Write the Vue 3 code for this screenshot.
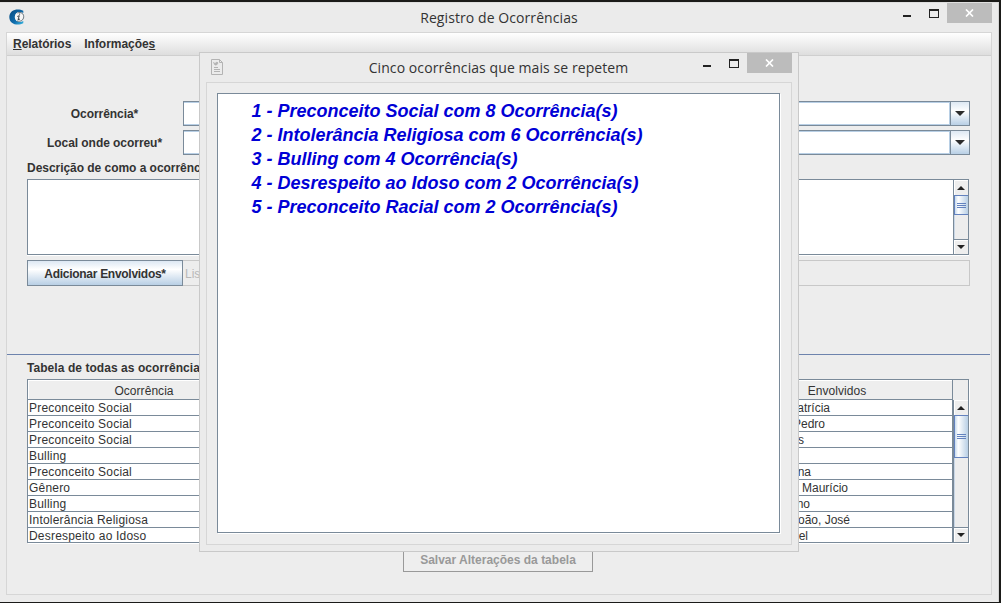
<script setup>
const items = [
  '1 - Preconceito Social com 8 Ocorrência(s)',
  '2 - Intolerância Religiosa com 6 Ocorrência(s)',
  '3 - Bulling com 4 Ocorrência(s)',
  '4 - Desrespeito ao Idoso com 2 Ocorrência(s)',
  '5 - Preconceito Racial com 2 Ocorrência(s)',
]
// "end" is the width in pixels that the list of people takes in its column
const rows = [
  { kind: 'Preconceito Social', people: 'Patrícia', end: 108 },
  { kind: 'Preconceito Social', people: 'Pedro', end: 103 },
  { kind: 'Preconceito Social', people: 's', end: 82 },
  { kind: 'Bulling', people: '', end: 0 },
  { kind: 'Preconceito Social', people: 'na', end: 89 },
  { kind: 'Gênero', people: 'Maurício', end: 126 },
  { kind: 'Bulling', people: 'no', end: 88 },
  { kind: 'Intolerância Religiosa', people: 'João, José', end: 128 },
  { kind: 'Desrespeito ao Idoso', people: 'el', end: 86 },
]
</script>

<template>
  <div class="desktop">
    <main class="window">
      <header class="titlebar">
        <svg class="app-icon" width="16" height="16" viewBox="0 0 16 16">
          <defs>
            <linearGradient id="crescent" x1="0" y1="0" x2="1" y2="1">
              <stop offset="0" stop-color="#084a80" /><stop offset=".6" stop-color="#0f6cac" /><stop offset="1" stop-color="#3cb8e2" />
            </linearGradient>
          </defs>
          <path d="M14.300 1.800V4C12 2.600 9 2.500 7.300 4.300 5.300 6.300 5.300 9.800 7.300 11.600 9.200 13.400 12 13.300 14.300 12v2.200C9 17.200.3 15.500.3 8S9-1.200 14.300 1.800z" fill="url(#crescent)" />
          <ellipse cx="10.300" cy="8" rx="4.400" ry="4.700" fill="#f6f6f6" />
          <path d="M8.500 4c3.500-1.500 6.300.8 6.200 3.700-.1 3.300-2.900 5.300-6.700 4.300" fill="none" stroke="#55626c" stroke-width=".9" />
          <path d="M8.300 7.500 10.300 6.700 9 10.700l2-.7M10.600 4.600v1.100" fill="none" stroke="#27323a" stroke-width=".9" />
        </svg>
        <h1 class="title">Registro de Ocorrências</h1>
        <div class="controls">
          <i class="min"></i><i class="max"></i>
          <span class="close"><svg width="9" height="8" viewBox="0 0 9 8"><path d="M1 .5 8 7.500M8 .5 1 7.500" stroke="#fff" stroke-width="1.700" /></svg></span>
        </div>
      </header>

      <div class="frame">
        <nav class="menubar">
          <span><u>R</u>elatórios</span><span>Informaçõe<u>s</u></span>
        </nav>

        <section class="form">
          <div class="field">
            <label>Ocorrência*</label>
            <div class="combo"><span class="value"></span><span class="drop"><svg width="10" height="5"><path d="M0 0h10L5 5z" fill="#2c2c2c" /></svg></span></div>
          </div>
          <div class="field">
            <label>Local onde ocorreu*</label>
            <div class="combo"><span class="value"></span><span class="drop"><svg width="10" height="5"><path d="M0 0h10L5 5z" fill="#2c2c2c" /></svg></span></div>
          </div>
          <p class="caption lower">Descrição de como a ocorrência aconteceu*</p>
          <div class="textarea">
            <div class="paper"></div>
            <div class="scroll">
              <span class="arrow up"><svg width="8" height="4"><path d="M0 4h8L4 0z" fill="#222" /></svg></span>
              <span class="thumb short"><i></i><i></i><i></i></span>
              <span class="track"></span>
              <span class="arrow down"><svg width="8" height="4"><path d="M0 0h8L4 4z" fill="#222" /></svg></span>
            </div>
          </div>
          <div class="people">
            <button class="add">Adicionar Envolvidos*</button>
            <div class="list">Lista</div>
          </div>
        </section>

        <section class="records">
          <p class="caption wide">Tabela de todas as ocorrências</p>
          <div class="table">
            <div class="grid">
              <div class="row head"><span>Ocorrência</span><span></span><span></span><span>Envolvidos</span></div>
              <div v-for="(r, i) in rows" :key="i" class="row">
                <span>{{ r.kind }}</span><span></span><span></span>
                <span><b :style="{ width: r.end + 'px' }">{{ r.people }}</b></span>
              </div>
            </div>
            <div class="side">
              <div class="corner"></div>
              <div class="scroll">
                <span class="arrow up"><svg width="8" height="4"><path d="M0 4h8L4 0z" fill="#222" /></svg></span>
                <span class="thumb tall"><i></i><i></i><i></i></span>
                <span class="track"></span>
                <span class="arrow down"><svg width="8" height="4"><path d="M0 0h8L4 4z" fill="#222" /></svg></span>
              </div>
            </div>
          </div>
          <button class="save">Salvar Alterações da tabela</button>
        </section>
      </div>
    </main>

    <div class="dialog">
      <header class="titlebar">
        <svg class="doc-icon" width="12" height="16" viewBox="0 0 12 16" fill="none" stroke="#b3b3b3">
          <path d="M.5.500h8l3 3v12H.500zM8.500.500v3h3" />
          <path d="M3 8.500h4M3 10.500h6M3 12.500h6" />
          <path d="M2.500 3.500 4 4.500l2-1.500 1 1-1.500 2H4z" fill="#b3b3b3" stroke-width=".8" />
        </svg>
        <h2 class="title">Cinco ocorrências que mais se repetem</h2>
        <div class="controls">
          <i class="min"></i><i class="max"></i>
          <span class="close"><svg width="9" height="8" viewBox="0 0 9 8"><path d="M1 .5 8 7.500M8 .5 1 7.500" stroke="#fff" stroke-width="1.700" /></svg></span>
        </div>
      </header>
      <div class="dialog-frame">
        <ol class="ranking">
          <li v-for="t in items" :key="t">{{ t }}</li>
        </ol>
      </div>
    </div>
  </div>
</template>

<style>
html, body { margin: 0; overflow: hidden; }
</style>

<style scoped>
* { box-sizing: border-box; }
.desktop {
  position: relative; width: 1001px; height: 603px; overflow: hidden;
  background: #1b1b19; padding: 2px 2px 1px 0;
  font: 12px/16px "Liberation Sans", Arial, sans-serif; color: #333;
}
.window {
  height: 600px; background: #ebebeb; border-right: 1px solid #d5d5d5; border-top: 1px solid #dedede;
  padding: 0 6px; display: flex; flex-direction: column;
}
.titlebar { display: flex; align-items: flex-start; height: 29px; flex: none; }
.app-icon { margin: 6px 0 0 3px; }
.title {
  flex: 1; margin: 0; text-align: center; color: #333; letter-spacing: .08px;
  font: 400 14px/20px "Open Sans", "Noto Sans", sans-serif;
}
.window .title { padding: 5px 0 0 70px; }
.controls { display: flex; }
.min { width: 8px; height: 2px; background: #222; margin: 12px 18px 0 0; }
.max { width: 10px; height: 9px; border: 1px solid #222; border-top-width: 2px; margin: 6px 8px 0 0; }
.close { width: 45px; height: 20px; background: #bcbcbc; display: flex; align-items: center; justify-content: center; }
.frame {
  height: 563px; border: 1px solid #d6d6d6; background: #ededed;
  display: flex; flex-direction: column;
}
.menubar {
  height: 23px; flex: none; display: flex; gap: 13px; padding: 3px 6px 0; font-weight: bold; letter-spacing: -.04px;
  background: linear-gradient(#fff, #dedede); border-bottom: 1px solid #cfcfcf;
}
.form { padding: 45px 21px 0 20px; height: 298px; flex: none; }
.field { display: grid; grid-template-columns: 156px 1fr; margin-bottom: 4px; height: 25px; align-items: center; }
label { text-align: center; font-weight: bold; letter-spacing: -.05px; padding-right: 1px; }
.combo { height: 25px; display: flex; border: 1px solid #7a8a99; }
.value { flex: 1; background: #fff; border: 1px solid #b8cfe5; border-left: 0; }
.drop {
  width: 19px; border-left: 1px solid #7a8a99; display: flex; align-items: center; justify-content: center;
  background: linear-gradient(#dde8f3, #fff 40%, #b8cfe5);
}
.caption { margin: 0; font-weight: bold; white-space: nowrap; letter-spacing: -.04px; }
.wide { letter-spacing: .06px; }
.lower { padding-top: 1px; margin-bottom: -1px; }
.textarea { display: flex; height: 76px; margin: 4px 1px 5px 0; border: 1px solid #7a8a99; box-shadow: 0 1px #fff; }
.paper { flex: 1; background: #fff; }
.scroll { width: 15px; display: flex; flex-direction: column; border-left: 1px solid #7a8a99; }
.arrow { height: 15px; flex: none; display: flex; align-items: center; justify-content: center; background: #eee; box-shadow: inset 1px 1px #fff; }
.down { border-top: 1px solid #7a8a99; }
.thumb {
  flex: none; border: 1px solid #6382bf; border-right: 0; background: linear-gradient(90deg, #c8dbee, #fff 25%, #b8cfe5);
  display: flex; flex-direction: column; gap: 1px; align-items: center; justify-content: center;
}
.thumb i { width: 9px; height: 1px; background: #6382bf; }
.thumb.short { height: 20px; }
.thumb.tall { height: 43px; }
.track { flex: 1; box-shadow: inset 1px 0 #c8d6e6; }
.people { display: flex; height: 26px; }
button { font: bold 12px/16px "Liberation Sans", Arial, sans-serif; color: #333; padding: 0; }
.add { width: 156px; border: 1px solid #7a8a99; background: linear-gradient(#dde8f3, #fff 35%, #b8cfe5); letter-spacing: -.28px; padding-top: 1px; }
.list { flex: 1; border: 1px solid #c8c8c8; border-left: 0; padding: 5px 2px 3px; color: #b8b8b8; }
.records { flex: 1; border-top: 1px solid #6d83ad; margin-right: 1px; padding: 5px 21px 0 20px; display: flex; flex-direction: column; }
.table { display: flex; height: 164px; margin-top: 3px; border: 1px solid #7a8a99; box-shadow: 1px 1px #fff; overflow: hidden; }
.grid { flex: 1; }
.row { display: grid; grid-template-columns: repeat(4, 1fr); height: 16px; background: #fff; border-bottom: 1px solid #7a8a99; line-height: 17px; letter-spacing: .2px; }
.row > span { padding-left: 1px; white-space: nowrap; height: 15px; }
.row b { display: block; text-align: right; font-weight: 400; letter-spacing: 0; }
.head { height: 20px; background: #eee; text-align: center; line-height: 23px; box-shadow: inset 1px 1px #fff; letter-spacing: .05px; }
.side { width: 16px; display: flex; flex-direction: column; border-left: 1px solid #7a8a99; }
.corner { height: 20px; flex: none; }
.side .scroll { flex: 1; }
.save { align-self: center; width: 190px; height: 25px; margin: 4px 0 0; border: 1px solid #999; background: #eee; color: #999; }
.dialog {
  position: absolute; left: 199px; top: 52px; width: 600px; height: 500px;
  background: #ebebeb; border: 1px solid #c9c9c9; padding: 0 6px;
}
.doc-icon { margin: 6px 0 0 5px; }
.dialog .title { padding: 5px 0 0 71px; }
.dialog-frame { height: 463px; border: 1px solid #d6d6d6; background: #ededed; padding: 10px; }
.ranking {
  height: 440px; width: 563px; margin: 0; padding: 5px 0 0 33.4px; list-style: none; background: #fff;
  border: 1px solid #7a8a99; box-shadow: 1px 1px #fff;
  font: italic bold 18px/24px "Liberation Sans", Arial, sans-serif; color: #0000d6; white-space: nowrap;
}
</style>
